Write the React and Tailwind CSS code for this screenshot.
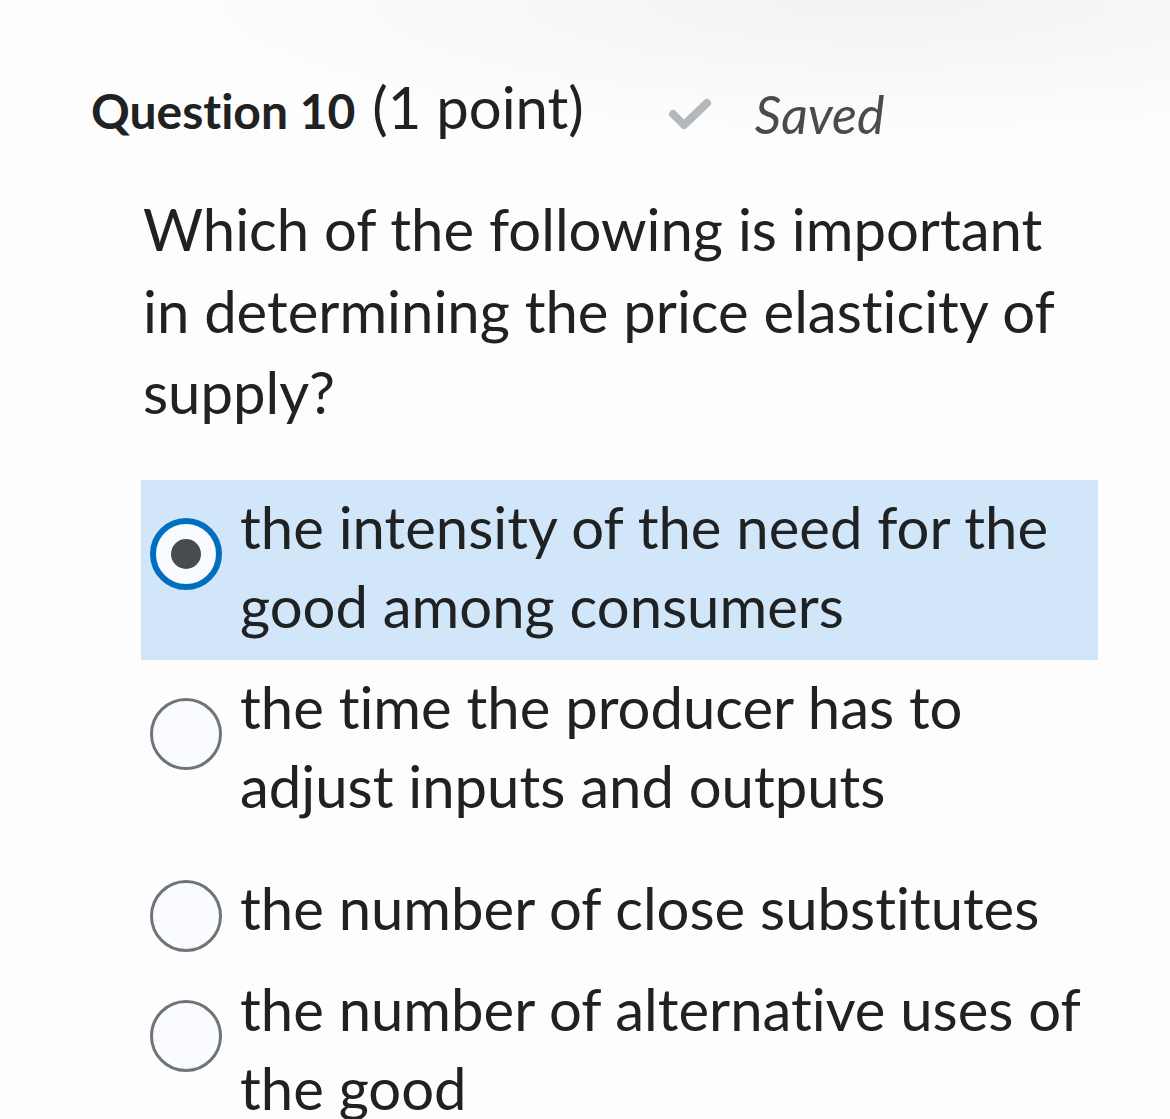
import React from 'react';

// radioTop: offset of the radio from the top of the first text line
const options = [
  { text: 'the intensity of the need for the good among consumers', selected: true, mt: 0, radioTop: 31 },
  { text: 'the time the producer has to adjust inputs and outputs', mt: 0, radioTop: 31 },
  { text: 'the number of close substitutes', mt: 21, radioTop: 12 },
  { text: 'the number of alternative uses of the good', mt: -5, radioTop: 31 },
];

function Radio({ selected }) {
  if (selected) {
    return (
      <div className="w-[72px] h-[72px] shrink-0 rounded-full border-[6px] border-[#006fbf] bg-[#f9fbff] flex items-center justify-center">
        <div className="w-[30px] h-[30px] rounded-full bg-[#494c4e]" />
      </div>
    );
  }
  return <div className="w-[72px] h-[72px] shrink-0 rounded-full border-[3px] border-[#6e7477] bg-[#f9fbff]" />;
}

export default function App() {
  return (
    <div className="min-h-screen bg-white bg-[radial-gradient(ellipse_60%_12%_at_75%_0%,#f2f2f2_0%,#f8f8f8_50%,#fdfdfd_100%)] font-['Lato','Noto_Sans',sans-serif] [font-variant-ligatures:none] text-[#202122] overflow-hidden">
      <div className="pt-[72px] pl-[91px] flex items-start">
        <h2 className="flex items-baseline leading-[70px]">
          <span className="text-[48px] font-bold">Question 10</span>
          <span className="text-[58px] ml-[17px]">(1 point)</span>
        </h2>
        <div className="ml-[84px] pt-[12px] flex items-start">
          <svg width="44" height="32" viewBox="0 0 44 32" className="mt-[14px]">
            <path d="M5 16 L16 27 L39 5" fill="none" stroke="#b3b8bd" strokeWidth="8" strokeLinecap="round" strokeLinejoin="round" />
          </svg>
          <span className="ml-[43px] text-[52px] leading-[60px] italic text-[#494c4e]">Saved</span>
        </div>
      </div>

      <p className="mt-[42px] ml-[143px] w-[950px] text-[58px] leading-[81.5px]">
        Which of the following is important in determining the price elasticity of supply?
      </p>

      <div className="mt-[47px] ml-[141px] w-[957px] flex flex-col">
        {options.map((o, i) => (
          <div
            key={i}
            style={{ marginTop: o.mt }}
            className={'flex items-start pl-[9px] pr-[8px] pt-[7px] pb-[15px] ' + (o.selected ? 'bg-[#d1e6f9]' : '')}
          >
            <div className="shrink-0" style={{ paddingTop: o.radioTop }}>
              <Radio selected={o.selected} />
            </div>
            <span className="ml-[18px] text-[58px] leading-[79px]">{o.text}</span>
          </div>
        ))}
      </div>
    </div>
  );
}
